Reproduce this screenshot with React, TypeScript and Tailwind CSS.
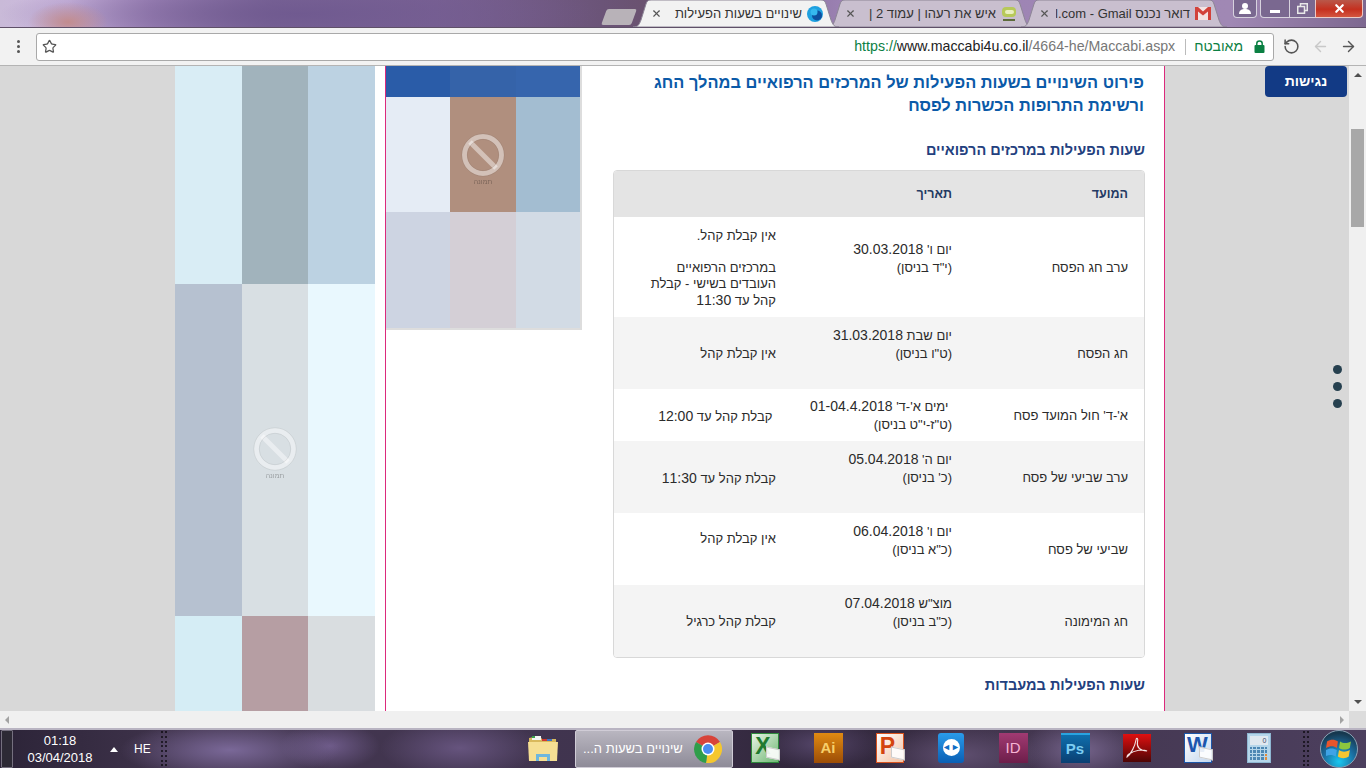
import React from "react";
import { ArrowLeft, ArrowRight, RotateCcw, Star, X } from "lucide-react";

// table data, right to left as on the page
const ROWS = [
  {
    name: `ערב חג הפסח`,
    date: [`יום ו' 30.03.2018`, `(י"ד בניסן)`, "\u00a0"],
    hours: [`אין קבלת קהל.`, "\u00a0", `במרכזים הרפואיים`, `העובדים בשישי - קבלת`, `קהל עד 11:30`],
    height: "h-[100px]",
    bg: "bg-white",
    hoursCell: "pr-[16px] pt-[2px] align-middle leading-[16px]",
  },
  {
    name: `חג הפסח`,
    date: [`יום שבת 31.03.2018`, `(ט"ו בניסן)`, "\u00a0"],
    hours: [`אין קבלת קהל`],
    height: "h-[72px]",
    bg: "bg-[#f4f4f4]",
    hoursCell: "pr-[16px] pt-[2px] align-middle leading-[16px]",
  },
  {
    name: `א'-ד' חול המועד פסח`,
    date: [`\u00a0ימים א'-ד' 01-04.4.2018`, `(ט"ז-י"ט בניסן)`],
    hours: [`\u00a0קבלת קהל עד 12:00`],
    height: "h-[52px]",
    bg: "bg-white",
    hoursCell: "pr-[16px] pt-[2px] align-middle leading-[16px]",
  },
  {
    name: `ערב שביעי של פסח`,
    date: [`יום ה' 05.04.2018`, `(כ' בניסן)`, "\u00a0"],
    hours: [`קבלת קהל עד 11:30`],
    height: "h-[72px]",
    bg: "bg-[#f4f4f4]",
    hoursCell: "pr-[16px] pt-[2px] align-middle leading-[16px]",
  },
  {
    name: `שביעי של פסח`,
    date: [`יום ו' 06.04.2018`, `(כ"א בניסן)`, "\u00a0"],
    hours: [`אין קבלת קהל`, "\u00a0"],
    height: "h-[72px]",
    bg: "bg-white",
    hoursCell: "pb-[4px] pr-[16px] align-middle leading-[16px]",
  },
  {
    name: `חג המימונה`,
    date: [`מוצ"ש 07.04.2018`, `(כ"ב בניסן)`, "\u00a0"],
    hours: [`קבלת קהל כרגיל`],
    height: "h-[72px]",
    bg: "bg-[#f4f4f4]",
    hoursCell: "pr-[16px] pt-[2px] align-middle leading-[16px]",
  },
];

// the digits on the page run a little wider than the Hebrew around them
function CellLine({ text }: { text: string }) {
  const parts = text.split(/(\d[\d.:-]*)/);
  return (
    <div>
      {parts.map((part, i) =>
        i % 2 === 1 ? (
          <span key={i} className="text-[14px]">
            {part}
          </span>
        ) : (
          part
        )
      )}
    </div>
  );
}

function TabShape({ fill }: { fill: string }) {
  return (
    <svg className="absolute inset-0" width="206" height="27" viewBox="0 0 206 27">
      <path d="M0 27 C5 27 6 25 8 20 L13 4 C14 1 15 0 18 0 L188 0 C191 0 192 1 193 4 L198 20 C200 25 201 27 206 27 Z" fill={fill} stroke="#8d8596" strokeWidth="1" />
    </svg>
  );
}

function Tab({ title, icon, active }: { title: string; icon: React.ReactNode; active?: boolean }) {
  return (
    <div className={active ? "relative z-10 -ml-[12px] h-[27px] w-[206px] shrink-0" : "relative -ml-[12px] h-[27px] w-[206px] shrink-0"}>
      <TabShape fill={active ? "#f2f2f2" : "#c9bfcf"} />
      <div className="relative flex h-full items-center pl-[18px] pr-[16px]">
        <X size={11} strokeWidth={2.5} className="shrink-0 text-[#555]" />
        <div className="ml-[6px] flex-1 overflow-hidden whitespace-nowrap text-right text-[13px] text-[#333]" dir="rtl">
          {title}
        </div>
        <div className="ml-[5px] flex w-[16px] shrink-0 justify-center">{icon}</div>
      </div>
    </div>
  );
}

function MaccabiFavicon() {
  return (
    <svg width="16" height="16" viewBox="0 0 16 16">
      <circle cx="8" cy="8" r="8" fill="#1ea0e0" />
      <circle cx="10" cy="9.5" r="5" fill="#0d4f9e" />
      <circle cx="7" cy="6" r="3.5" fill="#35b8ee" />
    </svg>
  );
}

function GreenFavicon() {
  return (
    <svg width="16" height="16" viewBox="0 0 16 16">
      <rect x="1" y="1" width="14" height="10" rx="4" fill="#b7c95a" />
      <rect x="4" y="4" width="9" height="4" rx="2" fill="#e9efc0" />
      <rect x="2" y="13" width="12" height="2" fill="#5d6b3a" />
    </svg>
  );
}

function GmailFavicon() {
  return (
    <svg width="16" height="13" viewBox="0 0 16 13">
      <rect width="16" height="13" fill="#f3e3e3" />
      <path d="M0 0 L3 0 L8 4.5 L13 0 L16 0 L16 13 L13 13 L13 4.5 L8 8.5 L3 4.5 L3 13 L0 13 Z" fill="#d2423a" />
    </svg>
  );
}

function LockIcon() {
  return (
    <svg className="ml-[11px] mr-[1px]" width="11" height="13" viewBox="0 0 11 13">
      <rect x="0.5" y="5" width="10" height="8" rx="1" fill="#0b8043" />
      <path d="M2.8 5.5 V3.5 C2.8 1.9 4 1 5.5 1 C7 1 8.2 1.9 8.2 3.5 V5.5" fill="none" stroke="#0b8043" strokeWidth="1.5" />
    </svg>
  );
}

function WindowControls() {
  return (
    <div className="ml-[6px] mr-[3px] flex h-[18px] shrink-0 self-start">
      <div className="flex w-[24px] items-center justify-center rounded-b-[4px] border border-t-0 border-white/70 bg-[#7a6890]">
        <svg width="12" height="11" viewBox="0 0 12 11">
          <circle cx="6" cy="3" r="3" fill="#fff" />
          <path d="M0 11 C0 7 3 6 6 6 C9 6 12 7 12 11 Z" fill="#fff" />
        </svg>
      </div>
      <div className="ml-[3px] flex w-[30px] items-center justify-center rounded-bl-[4px] border border-t-0 border-white/70 bg-[#7a6890]">
        <div className="mt-[5px] h-[3px] w-[10px] bg-white" />
      </div>
      <div className="flex w-[25px] items-center justify-center border-b border-white/70 bg-[#7a6890]">
        <svg width="11" height="11" viewBox="0 0 11 11" fill="none" stroke="#e8e8e8" strokeWidth="1.5">
          <rect x="3.5" y="0.75" width="6.75" height="6.75" />
          <rect x="0.75" y="3.5" width="6.75" height="6.75" fill="#7a6890" />
        </svg>
      </div>
      <div className="flex w-[48px] items-center justify-center rounded-br-[4px] border border-t-0 border-white/70 bg-[linear-gradient(#b9584a,#c5301f_55%,#d4553f)]">
        <X size={13} strokeWidth={4} className="text-white" />
      </div>
    </div>
  );
}

function BlockedMark() {
  return (
    <div className="flex flex-col items-center">
      <svg width="44" height="44" viewBox="0 0 44 44">
        <circle cx="22" cy="22" r="18.5" fill="none" stroke="#ffffff" strokeOpacity="0.45" strokeWidth="5" />
        <path d="M9 9 L35 35" stroke="#ffffff" strokeOpacity="0.45" strokeWidth="5" />
        <circle cx="22" cy="22" r="21.2" fill="none" stroke="#000000" strokeOpacity="0.08" strokeWidth="0.8" />
        <circle cx="22" cy="22" r="15.8" fill="none" stroke="#000000" strokeOpacity="0.08" strokeWidth="0.8" />
      </svg>
      <span className="mt-[1px] text-[7px] leading-[8px] text-black/30 blur-[0.4px]" dir="rtl">תמונה</span>
    </div>
  );
}

function AppIcon({ slot, children }: { slot: string; children: React.ReactNode }) {
  return <div className={slot + " flex shrink-0 justify-center pb-[3px]"}>{children}</div>;
}

function DocCorner() {
  return <div className="absolute bottom-[3px] right-[-2px] h-[11px] w-[14px] skew-y-[12deg] border border-[#ccc] bg-white/90" />;
}

function ChromeIcon() {
  return (
    <svg width="28" height="28" viewBox="0 0 28 28">
      <path d="M14 14 L2 7 A14 14 0 0 1 26 7 Z" fill="#d8443a" />
      <path d="M14 14 L26 7 A14 14 0 0 1 12 28 Z" fill="#f5c72e" />
      <path d="M14 14 L12 28 A14 14 0 0 1 2 7 Z" fill="#2f9e4a" />
      <circle cx="14" cy="14" r="6.5" fill="#fff" />
      <circle cx="14" cy="14" r="5" fill="#4a8df0" />
    </svg>
  );
}

function FolderIcon() {
  return (
    <svg width="32" height="32" viewBox="0 0 32 32">
      <path d="M2 5 L13 3 L15 6 L29 6 L30 28 L2 28 Z" fill="#d9b95c" />
      <rect x="5" y="3" width="9" height="4" fill="#f4f4f4" />
      <rect x="5" y="3" width="3" height="2" fill="#3aa04a" />
      <rect x="15" y="6" width="5" height="2" fill="#cf3a30" />
      <rect x="20" y="6" width="5" height="2" fill="#3c74c4" />
      <path d="M1 9 L31 9 L30 28 L2 28 Z" fill="#f6df93" />
      <path d="M9 28 L9 21 L23 21 L23 28 L20 28 L20 24 L12 24 L12 28 Z" fill="#6db7de" />
    </svg>
  );
}

function AcrobatIcon() {
  return (
    <div className="flex h-[28px] w-[28px] items-center justify-center bg-[linear-gradient(#e01010,#4e0505)]">
      <svg width="22" height="22" viewBox="0 0 22 22" fill="none" stroke="#f4e4e4" strokeWidth="1.1">
        <path d="M1 20 C5 17 9 9 10 3 C10.5 0 12.5 1 11.5 5 C10.5 10 14 14 21 14 C17 12 9 13 3 17 C1.5 18 1 19 1 20 Z" />
      </svg>
    </div>
  );
}

function CalculatorIcon() {
  const keys = Array.from({ length: 20 }, (_, i) => i);
  return (
    <div className="flex h-[30px] w-[24px] flex-col border border-[#8fb7d2] bg-[#b5d6ea] p-[2px]">
      <div className="flex h-[9px] items-center justify-end bg-[#dfe8ef] pr-[1px] text-[7px] leading-none text-[#446]">0</div>
      <div className="mt-[2px] grid flex-1 grid-cols-5 gap-[1px]">
        {keys.map((k) => (
          <div key={k} className={k === 14 || k === 19 ? "bg-[#e08c3c]" : "bg-[#4d88b4]"} />
        ))}
      </div>
    </div>
  );
}

function StartOrb() {
  return (
    <div className="flex h-[38px] w-[38px] shrink-0 items-center justify-center rounded-full border border-[#8aa3b5] bg-[radial-gradient(circle_at_50%_85%,#19c7f0,#1b6da0_45%,#16384f_80%)]">
      <svg width="26" height="24" viewBox="0 0 24 22">
        <path d="M1 4 C4 2 8 2 11 4 L10 10 C7 8 4 8 0 10 Z" fill="#e8552c" />
        <path d="M13 4 C16 6 19 6 23 4 L22 10 C19 12 15 12 12 10 Z" fill="#8cc63e" />
        <path d="M0 12 C3 10 7 10 10 12 L9 18 C6 16 3 16 -1 18 Z" fill="#3fa3e6" />
        <path d="M12 12 C15 14 18 14 22 12 L21 18 C18 20 14 20 11 18 Z" fill="#f6c531" />
      </svg>
    </div>
  );
}

function Gripper({ className }: { className: string }) {
  const dots = Array.from({ length: 16 }, (_, i) => i);
  return (
    <div className={className + " grid h-[36px] w-[7px] shrink-0 grid-cols-2 gap-x-[1px] gap-y-[2px]"}>
      {dots.map((d) => (
        <div key={d} className="h-[2px] w-[2px] bg-black/60" />
      ))}
    </div>
  );
}

function SideAd() {
  return (
    <div className="relative grid h-[645px] w-[200px] shrink-0 grid-cols-[67px_66px_67px] grid-rows-[218px_332px_95px]">
      <div className="bg-[#d9edf5]" />
      <div className="bg-[#a1b3bc]" />
      <div className="bg-[#bcd2e2]" />
      <div className="bg-[#b6c1d0]" />
      <div className="flex items-start justify-center bg-[#d8dfe3] pt-[143px]">
        <BlockedMark />
      </div>
      <div className="bg-[#e9f8fe]" />
      <div className="bg-[#d5edf5]" />
      <div className="bg-[#b69ea3]" />
      <div className="bg-[#d9dde0]" />
    </div>
  );
}

function InnerAd() {
  return (
    <div className="grid h-[264px] w-[196px] shrink-0 grid-cols-[64px_66px_64px] grid-rows-[31px_115px_116px] border-b-2 border-r-2 border-[#dddddd]">
      <div className="bg-[#2a5ca8]" />
      <div className="bg-[#3563a9]" />
      <div className="bg-[#3665ad]" />
      <div className="bg-[#e5ecf5]" />
      <div className="flex items-start justify-center bg-[#b08f7e] pt-[36px]">
        <BlockedMark />
      </div>
      <div className="bg-[#a3bdd1]" />
      <div className="bg-[#cdd4e2]" />
      <div className="bg-[#d4cfd6]" />
      <div className="bg-[#d2dbe5]" />
    </div>
  );
}

function HoursTable() {
  return (
    <div className="overflow-hidden rounded-[4px] border border-[#d8d8d8]">
      <table className="w-full table-fixed border-collapse text-[13px] text-[#2b2b2b]" dir="rtl">
        <colgroup>
          <col className="w-[176px]" />
          <col className="w-[176px]" />
          <col />
        </colgroup>
        <thead>
          <tr className="h-[46px] bg-[#e4e4e4] text-right text-[12.5px] font-bold text-[#243a63]">
            <th className="pr-[16px] font-bold">המועד</th>
            <th className="pr-[16px] font-bold">תאריך</th>
            <th />
          </tr>
        </thead>
        <tbody>
          {ROWS.map((row) => (
            <tr key={row.name} className={row.height + " " + row.bg}>
              <td className="pr-[16px] pt-[2px] align-middle">{row.name}</td>
              <td className="pr-[16px] align-middle leading-[18px]">
                {row.date.map((line, i) => (
                  <CellLine key={i} text={line} />
                ))}
              </td>
              <td className={row.hoursCell}>
                {row.hours.map((line, i) => (
                  <CellLine key={i} text={line} />
                ))}
              </td>
            </tr>
          ))}
        </tbody>
      </table>
    </div>
  );
}

export default function App() {
  return (
    <div className="flex h-screen w-[1366px] flex-col overflow-hidden font-['Liberation_Sans',Arial,sans-serif]">
      {/* Tab strip on the wallpaper */}
      <div className="flex h-[28px] shrink-0 items-end justify-end border-b border-[#5f5068] bg-[radial-gradient(ellipse_40px_20px_at_68px_22px,#c28c8e,transparent),radial-gradient(ellipse_300px_40px_at_300px_14px,#705a90,transparent),linear-gradient(90deg,#c9bad8_0%,#cdb8e0_5%,#a98ec2_11%,#7d6799_20%,#7b6294_32%,#6b5478_44%,#6a5270_47%,#9c82b4_62%,#a088b4_90%,#7d6890_100%)]">
        <div className="mb-[2px] mr-[11px] h-[16px] w-[30px] skew-x-[-20deg] rounded-[2px] bg-[#b8b2b8]" />
        <Tab active title="שינויים בשעות הפעילות" icon={<MaccabiFavicon />} />
        <Tab title="איש את רעהו | עמוד 2 |" icon={<GreenFavicon />} />
        <Tab title="דואר נכנס l.com - Gmail" icon={<GmailFavicon />} />
        <WindowControls />
      </div>

      {/* Toolbar */}
      <div className="flex h-[38px] shrink-0 items-center border-b border-[#b4b4b4] bg-[#f2f2f2]">
        <div className="flex w-[36px] shrink-0 flex-col items-center gap-[2px]">
          <div className="h-[3px] w-[3px] rounded-full bg-[#555]" />
          <div className="h-[3px] w-[3px] rounded-full bg-[#555]" />
          <div className="h-[3px] w-[3px] rounded-full bg-[#555]" />
        </div>
        <div className="flex h-[28px] w-[1238px] shrink-0 items-center rounded-[3px] border border-[#a9a9a9] bg-white pl-[5px] pr-[7px]">
          <Star size={15} strokeWidth={2} className="text-[#555]" />
          <div className="flex-1" />
          <div className="whitespace-nowrap text-[14.2px]" dir="ltr">
            <span className="text-[#0b8043]">https://</span>
            <span className="text-[#222]">www.maccabi4u.co.il</span>
            <span className="text-[#777]">/4664-he/Maccabi.aspx</span>
          </div>
          <div className="ml-[10px] mr-[8px] h-[16px] w-px bg-[#bbb]" />
          <span className="text-[14px] text-[#0b8043]" dir="rtl">מאובטח</span>
          <LockIcon />
        </div>
        <RotateCcw size={17} strokeWidth={2.2} className="ml-[9px] text-[#555]" />
        <ArrowLeft size={17} strokeWidth={2} className="ml-[12px] text-[#c8c8c8]" />
        <ArrowRight size={17} strokeWidth={2} className="ml-[11px] text-[#555]" />
      </div>

      {/* Page and vertical scrollbar */}
      <div className="flex h-[645px] shrink-0 overflow-hidden">
        <div className="flex w-[1349px] shrink-0 bg-[#d8d8d8]">
          <div className="w-[175px] shrink-0" />
          <SideAd />
          <div className="w-[10px] shrink-0 bg-white" />
          <div className="flex w-[780px] shrink-0 border-x border-[#dc2a7c] bg-white">
            <InnerAd />
            <div className="ml-[31px] w-[532px] shrink-0 pt-[5px]" dir="rtl">
              <h1 className="pr-[1px] text-[16.4px] font-bold leading-[23px] text-[#0b5aa8]">
                פירוט השינויים בשעות הפעילות של המרכזים הרפואיים במהלך החג
                <br />
                ורשימת התרופות הכשרות לפסח
              </h1>
              <h2 className="mb-[10px] mt-[23px] text-[14.5px] font-bold leading-[20px] text-[#23407e]">שעות הפעילות במרכזים הרפואיים</h2>
              <HoursTable />
              <h2 className="mt-[17px] text-[14.5px] font-bold leading-[20px] text-[#23407e]">שעות הפעילות במעבדות</h2>
            </div>
          </div>
          <div className="flex flex-1 flex-col items-end pr-[2px]">
            <div className="flex h-[31px] w-[82px] items-center justify-center rounded-[4px] bg-[#123a85] text-[14px] font-bold text-white" dir="rtl">
              נגישות
            </div>
            <div className="mr-[5px] mt-[268px] flex flex-col gap-[8px]">
              <div className="h-[9px] w-[9px] rounded-full bg-[#26404f]" />
              <div className="h-[9px] w-[9px] rounded-full bg-[#26404f]" />
              <div className="h-[9px] w-[9px] rounded-full bg-[#26404f]" />
            </div>
          </div>
        </div>
        <div className="flex w-[17px] shrink-0 flex-col items-center bg-[#f0f0f0]">
          <div className="mt-[7px] h-0 w-0 border-x-[4px] border-b-[4px] border-x-transparent border-b-[#505050]" />
          <div className="mt-[52px] h-[98px] w-[13px] bg-[#a8a8a8]" />
          <div className="mt-auto mb-[7px] h-0 w-0 border-x-[4px] border-t-[4px] border-x-transparent border-t-[#505050]" />
        </div>
      </div>

      {/* Horizontal scrollbar */}
      <div className="flex h-[17px] shrink-0 items-center bg-[#f0f0f0]">
        <div className="ml-[5px] h-0 w-0 border-y-[4px] border-r-[4px] border-y-transparent border-r-[#a3a3a3]" />
        <div className="flex-1" />
        <div className="mr-[5px] h-0 w-0 border-y-[4px] border-l-[4px] border-y-transparent border-l-[#a3a3a3]" />
        <div className="h-full w-[17px] bg-[#dcdcdc]" />
      </div>

      {/* Taskbar */}
      <div className="flex h-[40px] shrink-0 items-center border-t-2 border-[#b9b4c2] bg-[radial-gradient(ellipse_110px_30px_at_230px_20px,#7a6898,transparent),radial-gradient(ellipse_50px_24px_at_330px_16px,#6d5a88,transparent),radial-gradient(ellipse_80px_30px_at_460px_18px,#66547e,transparent),radial-gradient(ellipse_60px_30px_at_1080px_20px,#75648c,transparent),radial-gradient(ellipse_80px_30px_at_960px_25px,#5f4f70,transparent),radial-gradient(ellipse_60px_26px_at_820px_14px,#55466a,transparent),linear-gradient(90deg,#2c2438,#43364f_15%,#40344f_45%,#2f2539_60%,#43364f_75%,#4c3f5e_100%)] text-white">
        <div className="ml-[1px] h-[38px] w-[12px] shrink-0 rounded-[1px] border border-[#75707f] bg-[#2d2a35]" />
        <div className="ml-[8px] w-[78px] shrink-0 text-center text-[13px] leading-[17px]">
          <div>01:18</div>
          <div>03/04/2018</div>
        </div>
        <div className="ml-[11px] h-0 w-0 shrink-0 border-x-[4px] border-b-[5px] border-x-transparent border-b-white" />
        <div className="ml-[16px] w-[18px] shrink-0 text-[12px]">HE</div>
        <Gripper className="ml-[9px]" />
        <div className="w-[343px] shrink-0" />
        <div className="flex w-[64px] shrink-0 justify-center">
          <FolderIcon />
        </div>
        <div className="flex h-[38px] w-[158px] shrink-0 items-center justify-between rounded-[2px] border border-[#d0ccd6] bg-[linear-gradient(#b9b6c0,#8e8b98)] pl-[7px] pr-[10px]">
          <span className="whitespace-nowrap text-[13px]" dir="rtl">שינויים בשעות ה...</span>
          <ChromeIcon />
        </div>
        <AppIcon slot="w-[64px]">
          <div className="relative flex h-[30px] w-[28px] items-center justify-center border border-[#2e8a3c] bg-[linear-gradient(135deg,#e8f3e6,#6fb874)] pb-[3px] pr-[4px] text-[23px] font-bold leading-none text-[#1f7a30]">
            X
            <DocCorner />
          </div>
        </AppIcon>
        <AppIcon slot="w-[62px]">
          <div className="flex h-[30px] w-[29px] items-center justify-center bg-[linear-gradient(#e08a12,#9c4d06)] text-[15px] font-bold leading-none text-[#f7cf6a]">Ai</div>
        </AppIcon>
        <AppIcon slot="w-[61px]">
          <div className="relative flex h-[30px] w-[28px] items-center justify-center border border-[#d9531e] bg-[linear-gradient(135deg,#fff,#f2c3a5)] pb-[3px] pr-[4px] text-[23px] font-bold leading-none text-[#d4440f]">
            P
            <DocCorner />
          </div>
        </AppIcon>
        <AppIcon slot="w-[62px]">
          <div className="flex h-[30px] w-[26px] items-center justify-center rounded-[3px] bg-[linear-gradient(#2a9bea,#0a5fb4)]">
            <div className="flex h-[17px] w-[17px] items-center justify-center rounded-full bg-white text-[9px] font-bold leading-none text-[#0e6cc4]">◄►</div>
          </div>
        </AppIcon>
        <AppIcon slot="w-[62px]">
          <div className="flex h-[30px] w-[29px] items-center justify-center bg-[linear-gradient(#a13a72,#6d1e4a)] text-[15px] leading-none text-[#f6b4d4]">ID</div>
        </AppIcon>
        <AppIcon slot="w-[62px]">
          <div className="flex h-[30px] w-[29px] items-center justify-center border-t-2 border-[#2aa3e0] bg-[linear-gradient(#0f6eac,#0a3f72)] text-[15px] font-bold leading-none text-[#7ccdf2]">Ps</div>
        </AppIcon>
        <AppIcon slot="w-[61px]">
          <AcrobatIcon />
        </AppIcon>
        <AppIcon slot="w-[61px]">
          <div className="relative flex h-[30px] w-[28px] items-center justify-center border border-[#1c56a8] bg-[linear-gradient(135deg,#fff,#c3d6ee)] pb-[5px] text-[22px] font-bold leading-none text-[#1d56ae]">
            W
            <DocCorner />
          </div>
        </AppIcon>
        <AppIcon slot="w-[61px]">
          <CalculatorIcon />
        </AppIcon>
        <Gripper className="ml-[14px]" />
        <div className="ml-[10px]">
          <StartOrb />
        </div>
      </div>
    </div>
  );
}
